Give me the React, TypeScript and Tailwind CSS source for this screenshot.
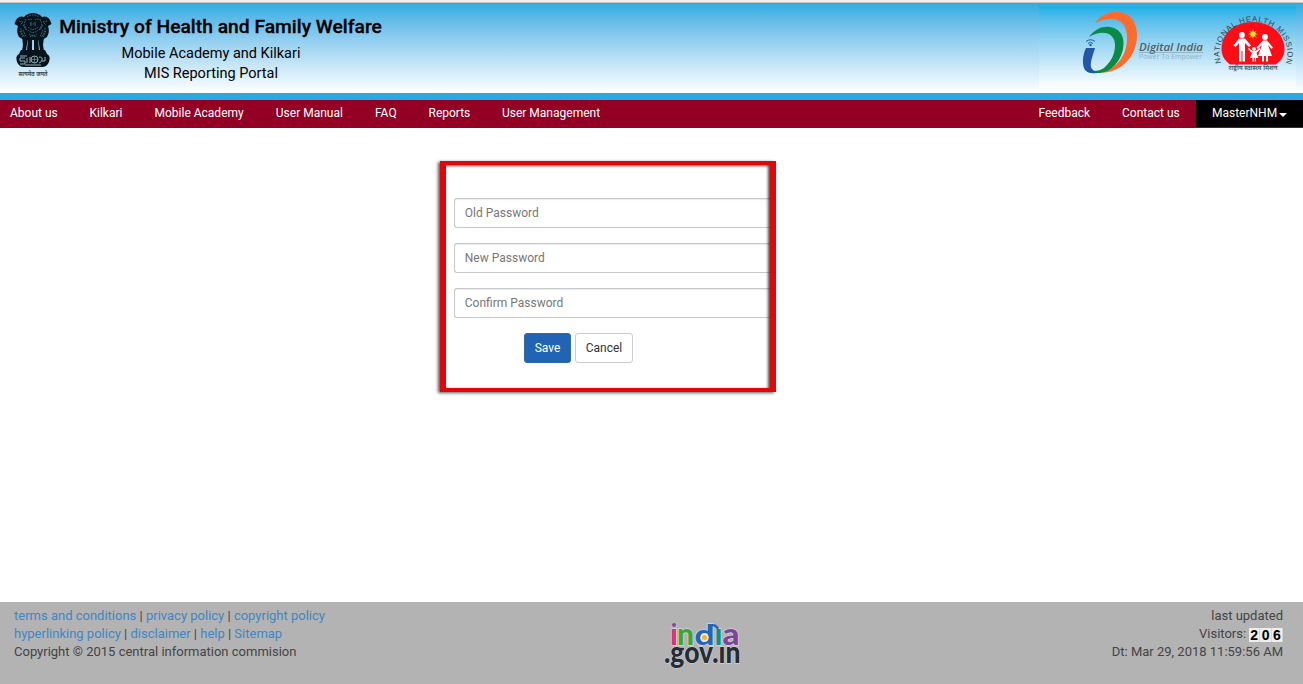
import React from "react";

const leftLinks = [
  { label: "About us", width: "w-[79.5px]" },
  { label: "Kilkari", width: "w-[65px]" },
  { label: "Mobile Academy", width: "w-[121.3px]" },
  { label: "User Manual", width: "w-[99.2px]" },
  { label: "FAQ", width: "w-[53.5px]" },
  { label: "Reports", width: "w-[73.5px]" },
  { label: "User Management", width: "w-[120px]" },
];

function Emblem() {
  return (
    <svg className="ml-[14px] mt-[9px] h-[67px] w-[38px] shrink-0 overflow-visible" viewBox="0 0 38 67">
      <g fill="#06131a">
        <path d="M12 3 Q19-1 26 3 L28 5 Q33 3 36 8 L37.500 12 L34 14 Q36 20 33 25 L28 28 H10 L5 25 Q2 20 4 14 L.5 12 L2 8 Q5 3 10 5Z" />
        <path d="M8 25h6l-2 14H8l1-6ZM14 26h4v13h-5ZM20 26h4l1 13h-5ZM24 25h6l-1 8 1 6h-4Z" />
        <path d="M7 38 H31 L33 42 Q37 44 35 50 Q33 55 28 55 H10 Q5 55 3 50 Q1 44 5 42Z" />
      </g>
      <g fill="none" stroke="#5da6c5" strokeWidth=".6" strokeDasharray="1.6 1">
        <path d="M13 5q6-4 12 0M14 8q2-2 4 0m3 0q2-2 4 0M16 12h6M12 7l-2 5 3 7M26 7l2 5-3 7M5 9l4 1-3 3M33 9l-4 1 3 3M7 16q0 6 4 9M31 16q0 6-4 9M14 15q5 5 10 0M14 18q5 5 10 0M15 22q4 4 8 0M9 18l3 7M29 18l-3 7M16 25l3-2 3 2M9 13l3 5M29 13l-3 5M6 19l3 6M32 19l-3 6M17 10v5M21 10v5" />
      </g>
      <g fill="none" stroke="#91b3bd" strokeWidth="1">
        <path d="M6 44h7M11 46H6v3h5v3H6M13 46v5M16 45v6M25 45q4 0 3 3t-3 3M31 45v4h-3M11 53h16" />
        <circle cx="20.500" cy="47.500" r="3.500" />
        <path d="M20.500 44v7m-3.500-3.500h7" strokeWidth=".5" />
      </g>
      <text x="19" y="63.500" textAnchor="middle" fontFamily="Noto Sans, Noto Sans CJK SC, sans-serif" fontSize="6.5" fontWeight="600" textLength="29" lengthAdjust="spacingAndGlyphs" fill="#29404a">सत्यमेव जयते</text>
    </svg>
  );
}

function DigitalIndiaLogo() {
  return (
    <svg className="absolute left-[42px] top-[4px] h-[66px] w-[124px]" viewBox="0 0 124 66">
      <path fill="#ff6b2b" d="M14 13C20 5 28 1 37 2C50 3 56 13 56 25C56 44 43 62 20 63C37 57 46 45 46 28C46 9 32 4 14 13Z" />
      <path fill="#078b47" d="M8 27C14 19 21 16 29 17C41 19 44 29 42 39C39 53 29 63 17 63C9 64 5 62 3 58C9 62 17 62 23 58C31 51 34 43 34 35C34 23 22 19 8 27Z" />
      <path fill="#2257a7" d="M5 38H14C12 45 9 52 10 57Q11 61 17 62Q6 65 3 58C1 52 2 44 5 38Z" />
      <g fill="none" stroke="#2257a7" strokeWidth="1"><path d="M5 31.500Q9.500 28 14 31.500M7 33.500Q9.500 31 12 33.500" /></g>
      <circle cx="9.500" cy="35" r="1.2" fill="#2257a7" />
      <text x="58" y="40.500" fontFamily="Open Sans, sans-serif" fontSize="11.500" fontStyle="italic" fontWeight="600" textLength="64" lengthAdjust="spacingAndGlyphs" fill="#535f66">Digital India</text>
      <path d="M58 42.500h64" stroke="#829ba4" strokeWidth=".6" />
      <text x="58" y="48.500" fontFamily="Open Sans, sans-serif" fontSize="6.5" textLength="63" lengthAdjust="spacingAndGlyphs" fill="#95b3bd">Power To Empower</text>
    </svg>
  );
}

function HealthMissionLogo() {
  return (
    <svg className="absolute left-[173px] top-[4px] h-[66px] w-[84px] overflow-visible" viewBox="0 0 84 66">
      <defs><path id="missionArc" d="M9 53 A34 32 0 1 1 74 53" /></defs>
      <path fill="#ff0c17" d="M18 54.500C12 50 9.500 45 9.500 39C9.500 23 23 12 41 12C59 12 72.500 24 72.500 39C72.500 46 69 51 64 54.500Z" />
      <text fontFamily="Liberation Sans, sans-serif" fontSize="7.8" fill="#30464e"><textPath href="#missionArc" textLength="123">NATIONAL HEALTH MISSION</textPath></text>
      <path d="M41 19.500v9m-4.500-4.500h9m-8-3.200 7 7m0-7-7 7" stroke="#ffac18" strokeWidth=".9" />
      <circle cx="41" cy="24" r="2.700" fill="#ffe52c" />
      <g fill="#fff">
        <circle cx="30" cy="25" r="2.900" />
        <path d="M27 28.500h6l6 7-2 1.500-4-4v18.500h-2.500V41h-1v10.500H27V33l-3.500 4-2-1.500Z" />
        <circle cx="53" cy="27" r="2.900" />
        <path d="M51 30.500h4l6 7-1.500 1.500-3.500-4 4 11h-4v5.500h-2V46h-2v5.500h-2V46h-4l4-11-4 4-1.500-1.500Z" />
        <circle cx="42" cy="39" r="1.900" />
        <path d="M40.500 41h3l4-3 1 1-4 4 2 5h-2.500v3.500h-1.200V48h-1v3.500h-1.300V48H38l2-5-4-4 1-1Z" />
      </g>
      <text x="41" y="60" textAnchor="middle" fontFamily="Noto Sans, sans-serif" fontSize="5.5" fontWeight="600" textLength="49" lengthAdjust="spacingAndGlyphs" fill="#44565e">राष्ट्रीय स्वास्थ्य मिशन</text>
    </svg>
  );
}

function IndiaLogo() {
  return (
    <svg className="absolute left-[664px] top-[18px] h-[52px] w-[78px] overflow-visible" viewBox="0 0 78 52">
      <g fontFamily="Lato, sans-serif" fontWeight="900" fontSize="30" stroke="#d6d6d6" strokeWidth="1.400" paintOrder="stroke">
        <text x="6" y="25" fill="#dc317c">ı</text>
        <text x="13" y="25" fill="#3da536">n</text>
        <text x="50.500" y="25" fill="#079182">ı</text>
        <text x="58.500" y="25" fill="#7e4499" textLength="17" lengthAdjust="spacingAndGlyphs">a</text>
        <text x="30.500" y="25" fontSize="28" fill="#2564b5" textLength="20" lengthAdjust="spacingAndGlyphs">d</text>
      </g>
      <path d="M46 5.500Q51 4 53.500 8" fill="none" stroke="#2564b5" strokeWidth="2.400" strokeLinecap="round" />
      <circle cx="40.500" cy="17.500" r="4.300" fill="#e8e8e8" />
      <circle cx="40.500" cy="17.500" r="2.500" fill="#ffb615" />
      <circle cx="10" cy="5" r="2.400" fill="#7e4499" stroke="#d6d6d6" strokeWidth=".6" />
      <text x="0" y="42.500" fontFamily="Lato, sans-serif" fontWeight="900" fontSize="29.500" textLength="76.500" lengthAdjust="spacingAndGlyphs" fill="#252c38" stroke="#d2d2d2" strokeWidth="1.300" paintOrder="stroke">.gov.ın</text>
    </svg>
  );
}

function PasswordField({ label }: { label: string }) {
  return <input aria-label={label} placeholder={label} className="block h-[30px] w-full rounded-l-[3px] border border-r-0 border-[#c6c9cc] bg-white px-[9.8px] pb-0 text-[12px] text-[#555] shadow-[inset_0_1px_1px_rgba(0,0,0,0.08)] outline-none placeholder:text-[#777]" />;
}

function FooterLinks({ links }: { links: string[] }) {
  return (
    <div>
      {links.map((label, index) => (
        <React.Fragment key={label}>
          {index > 0 && <span> | </span>}
          <a href="#" className="text-[#3d87c8]">{label}</a>
        </React.Fragment>
      ))}
    </div>
  );
}

export default function App() {
  return (
    <div className="flex h-[684px] w-[1303px] flex-col overflow-hidden bg-white font-[Roboto,sans-serif] text-[12px] leading-[18px] text-[#333]">
      <div className="h-[3px] border-b border-[#c8c5c1] bg-[#f1f0ee]" />
      <header className="flex h-[97px] border-b-[7px] border-[#29a9e0] bg-gradient-to-b from-[#29abe2] to-white">
        <Emblem />
        <div className="ml-[6.5px] w-[324px] text-center text-black">
          <h1 className="mt-[12px] whitespace-nowrap text-[19.25px] font-medium leading-[23px] [-webkit-text-stroke:0.3px_black]">Ministry of Health and Family Welfare</h1>
          <p className="mt-[6px] pr-[19px] text-[14.5px] leading-[20px]">Mobile Academy and Kilkari</p>
          <p className="pr-[19px] text-[14.5px] leading-[20px]">MIS Reporting Portal</p>
        </div>
        <div className="relative ml-auto mr-[7px] mt-[3px] h-[82px] w-[257px] bg-gradient-to-b from-[#12b0e5] to-white">
          <DigitalIndiaLogo />
          <HealthMissionLogo />
        </div>
      </header>
      <nav className="flex h-[28px] bg-[#930024] pl-[10px] leading-[26px] text-white">
        {leftLinks.map((link) => <a key={link.label} href="#" className={link.width}>{link.label}</a>)}
        <a href="#" className="ml-auto w-[83.6px]">Feedback</a>
        <a href="#" className="w-[74px]">Contact us</a>
        <button className="flex h-[27px] w-[107px] items-center bg-black pl-[16px] pb-px leading-[26px]">
          MasterNHM
          <svg className="ml-[2px] mt-[3px] h-[4px] w-[8px]" viewBox="0 0 8 4"><path fill="white" d="M0 0h8L4 4Z" /></svg>
        </button>
      </nav>
      <main className="h-[474px] pl-[440px] pt-[33px]">
        <form className="relative h-[231px] w-[336px] pl-[14px] pr-[5px] pt-[37px]">
          <div className="flex flex-col gap-[15px]">
            <PasswordField label="Old Password" />
            <PasswordField label="New Password" />
            <PasswordField label="Confirm Password" />
          </div>
          <div className="ml-[70px] mt-[15px] flex gap-[4px]">
            <button type="button" className="h-[30px] w-[47px] rounded-[3px] border border-[#2e6da4] bg-[#2264b4] text-white">Save</button>
            <button type="button" className="h-[30px] w-[58px] rounded-[3px] border border-[#ccc] bg-white">Cancel</button>
          </div>
          <div className="pointer-events-none absolute inset-0 border-x-[6px] border-y-[4px] border-[#dd080b] shadow-[-2px_1px_3px_rgba(0,0,0,0.65),inset_-2px_1px_3px_rgba(0,0,0,0.7)]" />
        </form>
      </main>
      <footer className="relative flex h-[82px] justify-between bg-[#b3b3b3] px-[14px] pr-[20px] pt-[5px] text-[13px] text-[#444]">
        <div>
          <FooterLinks links={["terms and conditions", "privacy policy", "copyright policy"]} />
          <FooterLinks links={["hyperlinking policy", "disclaimer", "help", "Sitemap"]} />
          <div>Copyright © 2015 central information commision</div>
        </div>
        <IndiaLogo />
        <div className="text-right">
          <div>last updated</div>
          <div className="flex h-[18px] items-center justify-end">Visitors:
            <div className="ml-[3px] mt-[2px] flex h-[14px] bg-[#eee] text-[14px] font-bold leading-[14px] text-black">
              {["2", "0", "6"].map((digit) => <span key={digit} className="w-[11.3px] border-r border-[#d7d7d7] text-center font-['Liberation_Sans',sans-serif]">{digit}</span>)}
            </div>
          </div>
          <div>Dt: Mar 29, 2018 11:59:56 AM</div>
        </div>
      </footer>
    </div>
  );
}
